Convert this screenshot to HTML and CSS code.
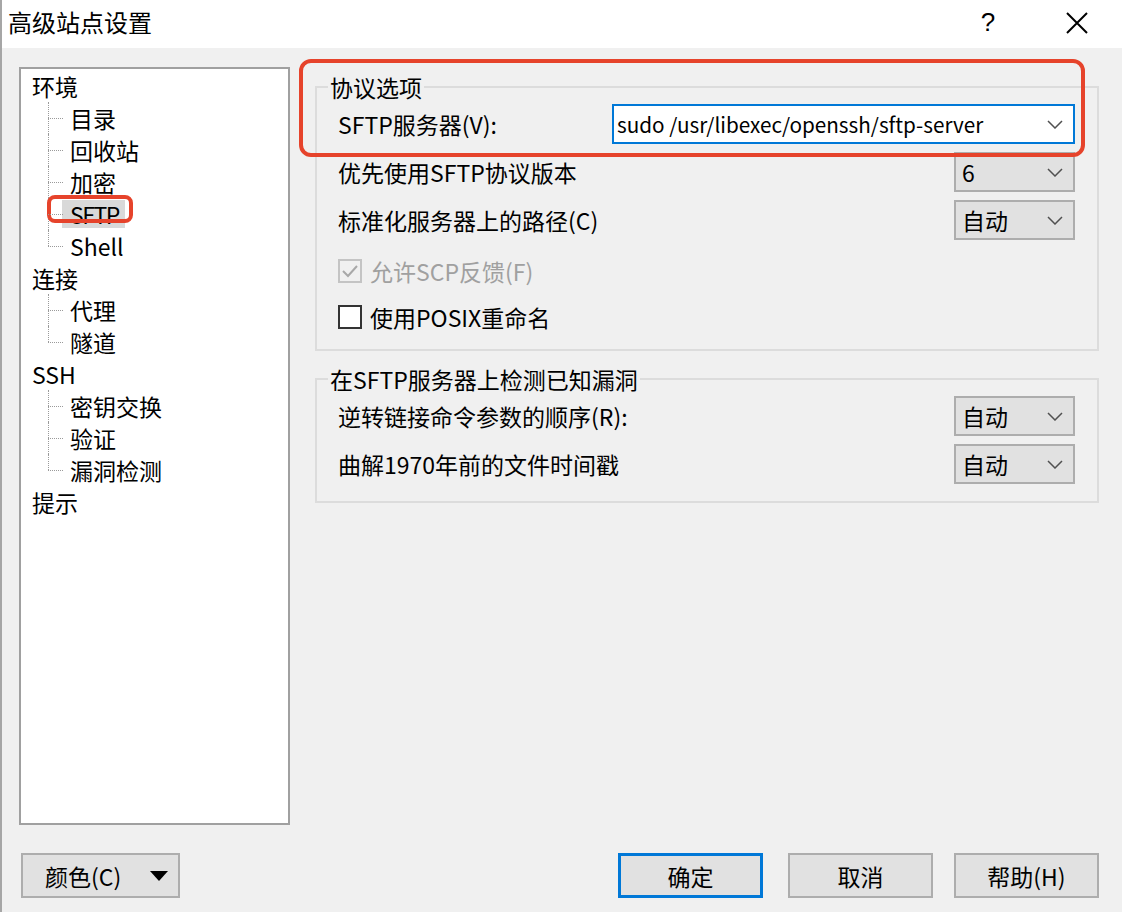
FILE: index.html
```html
<!DOCTYPE html>
<html>
<head>
  <title>高级站点设置</title>
  <link rel="stylesheet" href="styles.css">
</head>
<body>
  <div class="titlebar">
    <span class="title">高级站点设置</span>
    <span class="help">?</span>
    <span class="close">
      <svg width="22" height="22" viewBox="0 0 22 22"><path d="M1 1L21 21M21 1L1 21" stroke="#000" stroke-width="2" fill="none"/></svg>
    </span>
  </div>

  <div class="main">
    <div class="tree">
      <div class="item">环境</div>
      <div class="branch">
        <div class="item">目录</div>
        <div class="item">回收站</div>
        <div class="item">加密</div>
        <div class="item"><span class="sel">SFTP<span class="mark"></span></span></div>
        <div class="item">Shell</div>
      </div>
      <div class="item">连接</div>
      <div class="branch">
        <div class="item">代理</div>
        <div class="item">隧道</div>
      </div>
      <div class="item">SSH</div>
      <div class="branch">
        <div class="item">密钥交换</div>
        <div class="item">验证</div>
        <div class="item">漏洞检测</div>
      </div>
      <div class="item">提示</div>
    </div>

    <div class="panel">
      <div class="annot"></div>

      <fieldset class="group">
        <legend>协议选项</legend>
        <div class="rows">
          <div class="row first">
            <span class="label">SFTP服务器(V):</span>
            <div class="input">
              <span>sudo /usr/libexec/openssh/sftp-server</span>
              <svg class="chev" width="16" height="9" viewBox="0 0 16 9"><path d="M1 1L8 8L15 1" stroke="#505050" stroke-width="1.5" fill="none"/></svg>
            </div>
          </div>
          <div class="row">
            <span class="label">优先使用SFTP协议版本</span>
            <div class="combo">
              <span>6</span>
              <svg class="chev" width="16" height="9" viewBox="0 0 16 9"><path d="M1 1L8 8L15 1" stroke="#505050" stroke-width="1.5" fill="none"/></svg>
            </div>
          </div>
          <div class="row">
            <span class="label">标准化服务器上的路径(C)</span>
            <div class="combo">
              <span>自动</span>
              <svg class="chev" width="16" height="9" viewBox="0 0 16 9"><path d="M1 1L8 8L15 1" stroke="#505050" stroke-width="1.5" fill="none"/></svg>
            </div>
          </div>
          <div class="check disabled">
            <span class="box">
              <svg width="20" height="20" viewBox="0 0 20 20"><path d="M3 10L8 15L17 5" stroke="#a8a8a8" stroke-width="2" fill="none"/></svg>
            </span>
            <span>允许SCP反馈(F)</span>
          </div>
          <div class="check second">
            <span class="box"></span>
            <span>使用POSIX重命名</span>
          </div>
        </div>
      </fieldset>

      <fieldset class="group two">
        <legend>在SFTP服务器上检测已知漏洞</legend>
        <div class="rows">
          <div class="row first">
            <span class="label">逆转链接命令参数的顺序(R):</span>
            <div class="combo">
              <span>自动</span>
              <svg class="chev" width="16" height="9" viewBox="0 0 16 9"><path d="M1 1L8 8L15 1" stroke="#505050" stroke-width="1.5" fill="none"/></svg>
            </div>
          </div>
          <div class="row">
            <span class="label">曲解1970年前的文件时间戳</span>
            <div class="combo">
              <span>自动</span>
              <svg class="chev" width="16" height="9" viewBox="0 0 16 9"><path d="M1 1L8 8L15 1" stroke="#505050" stroke-width="1.5" fill="none"/></svg>
            </div>
          </div>
        </div>
      </fieldset>
    </div>
  </div>

  <div class="footer">
    <div class="btn color">
      <span>颜色(C)</span>
      <svg width="18" height="10" viewBox="0 0 18 10"><path d="M0 0H18L9 10Z" fill="#000"/></svg>
    </div>
    <div class="btn ok">确定</div>
    <div class="btn cancel">取消</div>
    <div class="btn helpbtn">帮助(H)</div>
  </div>
</body>
</html>
```

FILE: styles.css
```css
body {
  margin: 0;
  height: 912px;
  background-color: #f0f0f0;
  border-left: 2px solid #a6a6a6;
  font-family: "Noto Sans CJK SC", "Microsoft YaHei", sans-serif;
  font-size: 23px;
  color: #000;
  overflow: hidden;
}

.titlebar {
  display: flex;
  align-items: center;
  height: 48px;
  background-color: #fff;
  padding-left: 6px;
  padding-right: 22px;
}

.title {
  flex: 1;
  font-size: 24px;
  line-height: 44px;
  margin-top: -4px;
}

.help {
  width: 46px;
  text-align: center;
  font-family: "Liberation Sans", sans-serif;
  font-size: 26px;
  line-height: 44px;
  margin-right: 43px;
  margin-top: -4px;
}

.close {
  width: 46px;
  display: flex;
  justify-content: center;
  align-items: center;
  height: 44px;
  margin-top: -3px;
}

.main {
  display: flex;
  align-items: flex-start;
  padding: 19px 23px 0 17px;
}

.tree {
  width: 271px;
  height: 758px;
  box-sizing: border-box;
  background-color: #fff;
  border: 2px solid #a0a0a0;
  padding: 1px 0 0 11px;
}

.item {
  display: flex;
  align-items: center;
  height: 32px;
  white-space: nowrap;
}

.branch {
  margin-left: 16px;
}

.branch .item {
  position: relative;
  padding-left: 22px;
}

.branch .item::before {
  content: '';
  position: absolute;
  left: 0;
  top: 0;
  bottom: 0;
  border-left: 1px dotted #9a9a9a;
}

.branch .item:last-child::before {
  bottom: 50%;
}

.branch .item::after {
  content: '';
  position: absolute;
  left: 0;
  top: 50%;
  width: 15px;
  border-top: 1px dotted #9a9a9a;
}

.sel {
  position: relative;
  display: inline-block;
  margin-left: -8px;
  padding: 0 6px 0 8px;
  line-height: 28px;
  letter-spacing: -1.5px;
  background-color: #d9d9d9;
}

.mark {
  position: absolute;
  left: -15px;
  top: -5px;
  width: 86px;
  height: 28px;
  box-sizing: border-box;
  border: 4px solid #e6432b;
  border-radius: 8px;
}

.panel {
  position: relative;
  flex: 1;
  margin-left: 25px;
}

.annot {
  position: absolute;
  left: -16px;
  top: -8px;
  width: 786px;
  height: 98px;
  box-sizing: border-box;
  border: 4px solid #e6432b;
  border-radius: 12px;
  z-index: 2;
}

.group {
  margin: 6px 0 0 0;
  padding: 0 0 16px 0;
  border: 2px solid #dcdcdc;
  min-width: 0;
}

.group.two {
  margin-top: 14px;
  padding-bottom: 17px;
}

.group legend {
  margin-left: 11px;
  padding: 0 2px;
  line-height: 28px;
}

.rows {
  padding: 0 22px 0 21px;
}

.row {
  display: flex;
  align-items: center;
  justify-content: space-between;
  height: 40px;
  margin-top: 8px;
}

.row.first {
  margin-top: 3px;
}

.label {
  white-space: nowrap;
}

.input {
  display: flex;
  align-items: center;
  justify-content: space-between;
  width: 463px;
  height: 40px;
  box-sizing: border-box;
  background-color: #fff;
  border: 2px solid #0078d7;
  padding: 0 10px 0 3px;
  font-size: 20.7px;
}

.combo {
  display: flex;
  align-items: center;
  justify-content: space-between;
  width: 121px;
  height: 40px;
  box-sizing: border-box;
  background-color: #e1e1e1;
  border: 2px solid #adadad;
  padding: 0 10px 0 6px;
}

.check {
  display: flex;
  align-items: center;
  height: 32px;
  margin-top: 15px;
  gap: 8px;
}

.check.second {
  margin-top: 14px;
}

.box {
  width: 24px;
  height: 24px;
  box-sizing: border-box;
  border: 2px solid #333;
  background-color: #fff;
  display: flex;
  align-items: center;
  justify-content: center;
}

.check.disabled {
  color: #a0a0a0;
}

.check.disabled .box {
  border-color: #c4c4c4;
  background-color: #f0f0f0;
}

.footer {
  display: flex;
  align-items: center;
  padding: 28px 23px 0 19px;
}

.btn {
  display: flex;
  align-items: center;
  justify-content: center;
  width: 145px;
  height: 45px;
  box-sizing: border-box;
  background-color: #e1e1e1;
  border: 2px solid #adadad;
}

.btn.color {
  width: 159px;
  justify-content: space-between;
  padding: 0 10px 0 22px;
  margin-right: auto;
}

.btn.ok {
  border: 3px solid #0078d7;
}

.btn.cancel {
  margin-left: 25px;
}

.btn.helpbtn {
  margin-left: 21px;
}
```
